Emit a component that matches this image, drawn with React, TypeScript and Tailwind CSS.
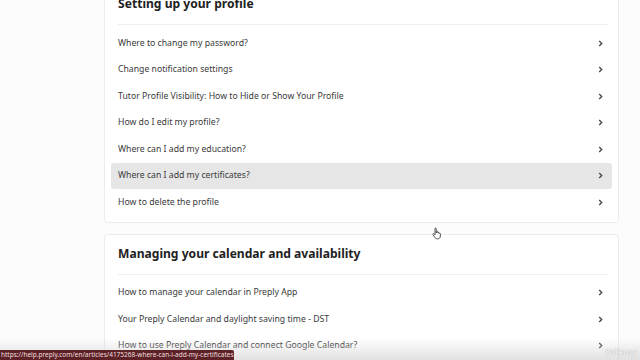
import React from 'react';

const profileItems = [
  'Where to change my password?',
  'Change notification settings',
  'Tutor Profile Visibility: How to Hide or Show Your Profile',
  'How do I edit my profile?',
  'Where can I add my education?',
  'Where can I add my certificates?',
  'How to delete the profile',
];

const calendarItems = [
  'How to manage your calendar in Preply App',
  'Your Preply Calendar and daylight saving time - DST',
  'How to use Preply Calendar and connect Google Calendar?',
];

const Chevron = () => (
  <svg width="5" height="7" viewBox="0 0 5 7" className="shrink-0">
    <path d="M1.2 1 L3.7 3.5 L1.2 6" fill="none" stroke="#4a4a4a" strokeWidth="1.4" />
  </svg>
);

const Row = ({ label, active }: { label: string; active?: boolean }) => (
  <div
    className={`flex items-center justify-between h-[26.5px] pl-[7px] pr-[9px] rounded-[3px] ${
      active ? 'bg-[#e6e6e6]' : ''
    }`}
  >
    <span className="text-[8.7px] text-[#3a3a3a]">{label}</span>
    <Chevron />
  </div>
);

const Section = ({
  title,
  items,
  active,
}: {
  title: string;
  items: string[];
  active?: number;
}) => (
  <div className="bg-white border border-[#ececec] rounded-[4px] px-[6px] pt-[9px] pb-[6px]">
    <h2 className="px-[7px] h-[20px] leading-[20px] text-[12.1px] font-bold text-[#222]">{title}</h2>
    <div className="ml-[7px] mr-[4px] mt-[10px] mb-[5px] border-t border-[#efefef]" />
    {items.map((item, i) => (
      <Row key={item} label={item} active={i === active} />
    ))}
  </div>
);

export default function App() {
  return (
    <div
      className="relative w-[640px] h-[360px] overflow-hidden bg-[#fcfcfc]"
      style={{ fontFamily: '"Noto Sans", "Open Sans", sans-serif' }}
    >
      <div className="ml-[104px] w-[515px] mt-[-16px] flex flex-col gap-[11px]">
        <Section title="Setting up your profile" items={profileItems} active={5} />
        <Section title="Managing your calendar and availability" items={calendarItems} />
      </div>

      {/* video vignette at the bottom */}
      <div className="absolute left-0 right-0 bottom-0 h-[22px] bg-gradient-to-b from-transparent to-[#d4d4d4]/70 pointer-events-none" />

      {/* cursor */}
      <svg className="absolute left-[432px] top-[227px]" width="12" height="13" viewBox="0 0 12 13">
        <path
          d="M3 1.5 C3 0.8 4.2 0.8 4.2 1.5 V6 L4.6 4.6 C4.8 4 5.8 4.1 5.8 4.8 V6 C6 5.3 7.1 5.3 7.1 6 V6.6 C7.3 6 8.4 6.1 8.4 6.8 V9 C8.4 10.8 7.3 11.8 5.8 11.8 H5 C3.8 11.8 3.2 11.1 2.6 10.2 L1 7.6 C0.6 7 1.4 6.3 2 6.8 L3 7.8 Z"
          fill="#fff"
          stroke="#444"
          strokeWidth="0.9"
        />
      </svg>

      {/* status bar link */}
      <div className="absolute left-0 bottom-0 h-[10px] w-[234px] bg-[#5c2127] rounded-tr-[2px] flex items-center pl-[1px] overflow-hidden">
        <span className="text-[6.5px] leading-[10px] text-[#f1dede] whitespace-nowrap">
          https://help.preply.com/en/articles/4175268-where-can-i-add-my-certificates
        </span>
      </div>

      {/* watermark */}
      <div className="absolute right-[3px] bottom-[2px] text-[9px] font-bold text-white/80 [text-shadow:0_0_1px_#999]">
        Udemy
      </div>
    </div>
  );
}
